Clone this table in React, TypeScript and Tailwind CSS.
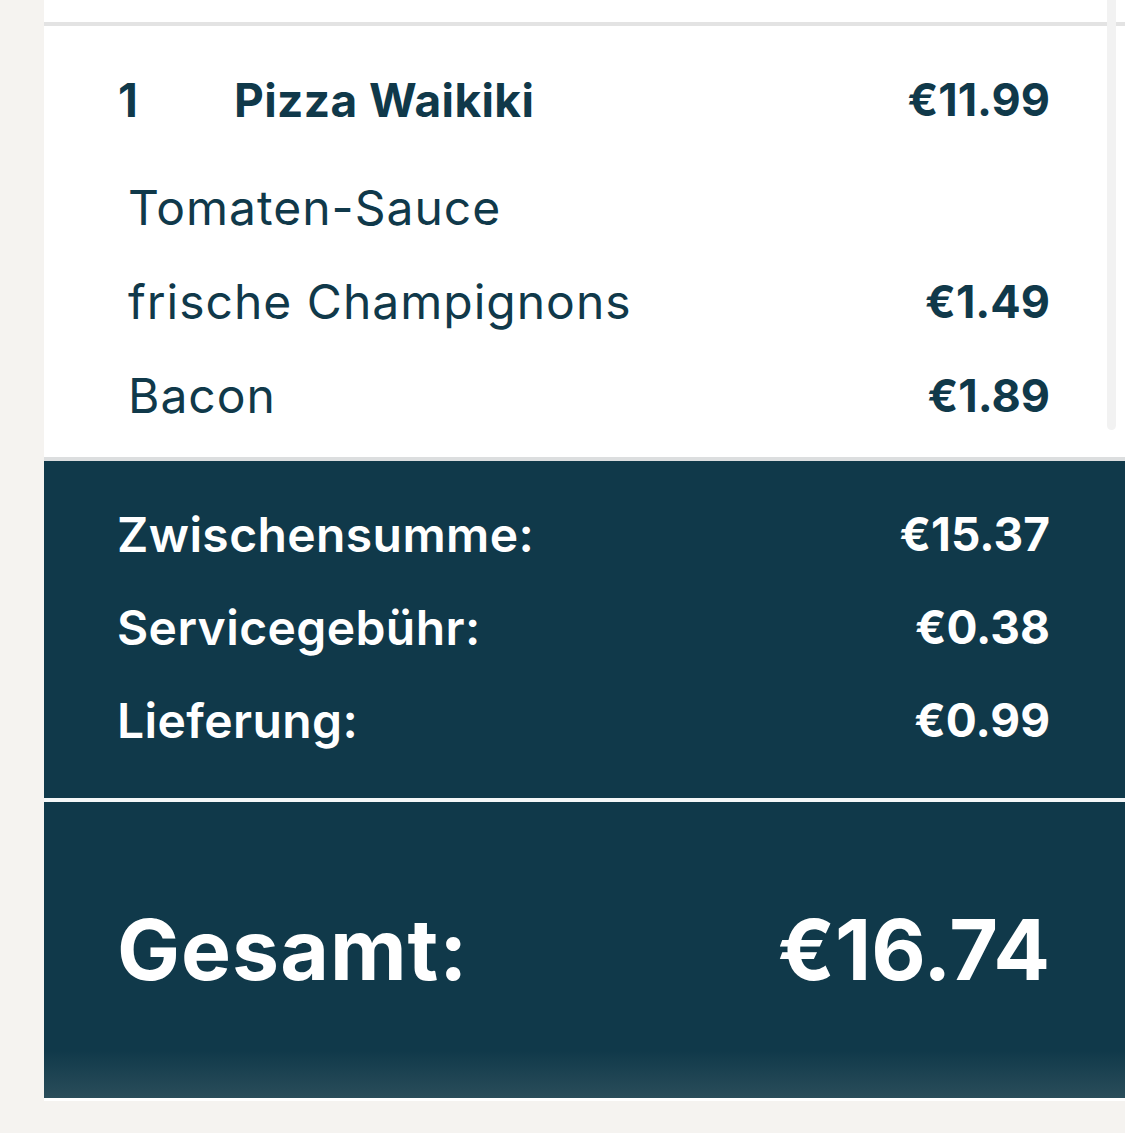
const item = { qty: 1, name: 'Pizza Waikiki', price: '€11.99' }

const extras = [
  { label: 'Tomaten-Sauce', price: '' },
  { label: 'frische Champignons', price: '€1.49' },
  { label: 'Bacon', price: '€1.89' },
]

const totals = [
  { label: 'Zwischensumme:', value: '€15.37' },
  { label: 'Servicegebühr:', value: '€0.38' },
  { label: 'Lieferung:', value: '€0.99' },
]

export default function App() {
  return (
    <div
      className="relative flex w-full h-[1133px] bg-[#f5f3f0] overflow-hidden"
      style={{ fontFamily: 'Inter, "Noto Sans", sans-serif' }}
    >
      <div className="w-[44px] shrink-0" />

      <div className="flex-1 flex flex-col">
        {/* cart items */}
        <div className="bg-white h-[22px]" />
        <div className="h-[4px] bg-[#e3e3e3]" />
        <div className="bg-white pt-[27px] pb-[14px] pl-[74px] pr-[75px] text-[#10394a]">
          <div className="flex items-center h-[94px] text-[46px] font-bold">
            <span className="w-[116px]">{item.qty}</span>
            <span className="flex-1 tracking-[0.4px]">{item.name}</span>
            <span className="text-[45px]">{item.price}</span>
          </div>
          <div className="h-[14px]" />
          {extras.map((e) => (
            <div key={e.label} className="flex items-center justify-between h-[94px] pl-[10px]">
              <span className="text-[48px] font-normal tracking-[1px]">{e.label}</span>
              <span className="text-[45px] font-bold">{e.price}</span>
            </div>
          ))}
        </div>

        {/* summary */}
        <div className="h-[4px] bg-[#dcdedf]" />
        <div className="bg-[#10394a] h-[337px] pt-[27px] pl-[73px] pr-[75px] text-white">
          {totals.map((t) => (
            <div key={t.label} className="flex items-center justify-between h-[93px]">
              <span className="text-[48px] font-semibold tracking-[0.4px]">{t.label}</span>
              <span className="text-[46px] font-bold">{t.value}</span>
            </div>
          ))}
        </div>
        <div className="h-[4px] bg-[#f4f7f8]" />
        <div className="h-[296px] flex items-center justify-between pl-[73px] pr-[75px] text-white bg-[linear-gradient(180deg,#10394a_0%,#10394a_84%,#2a4d5a_100%)]">
          <span className="text-[84px] font-bold tracking-[1px]">Gesamt:</span>
          <span className="text-[84px] font-bold">€16.74</span>
        </div>
        <div className="h-[3px] bg-white" />
      </div>

      {/* scrollbar */}
      <div className="absolute top-0 left-[1107px] w-[9px] h-[430px] rounded-b-full bg-[#f2f2f2]" />
    </div>
  )
}
